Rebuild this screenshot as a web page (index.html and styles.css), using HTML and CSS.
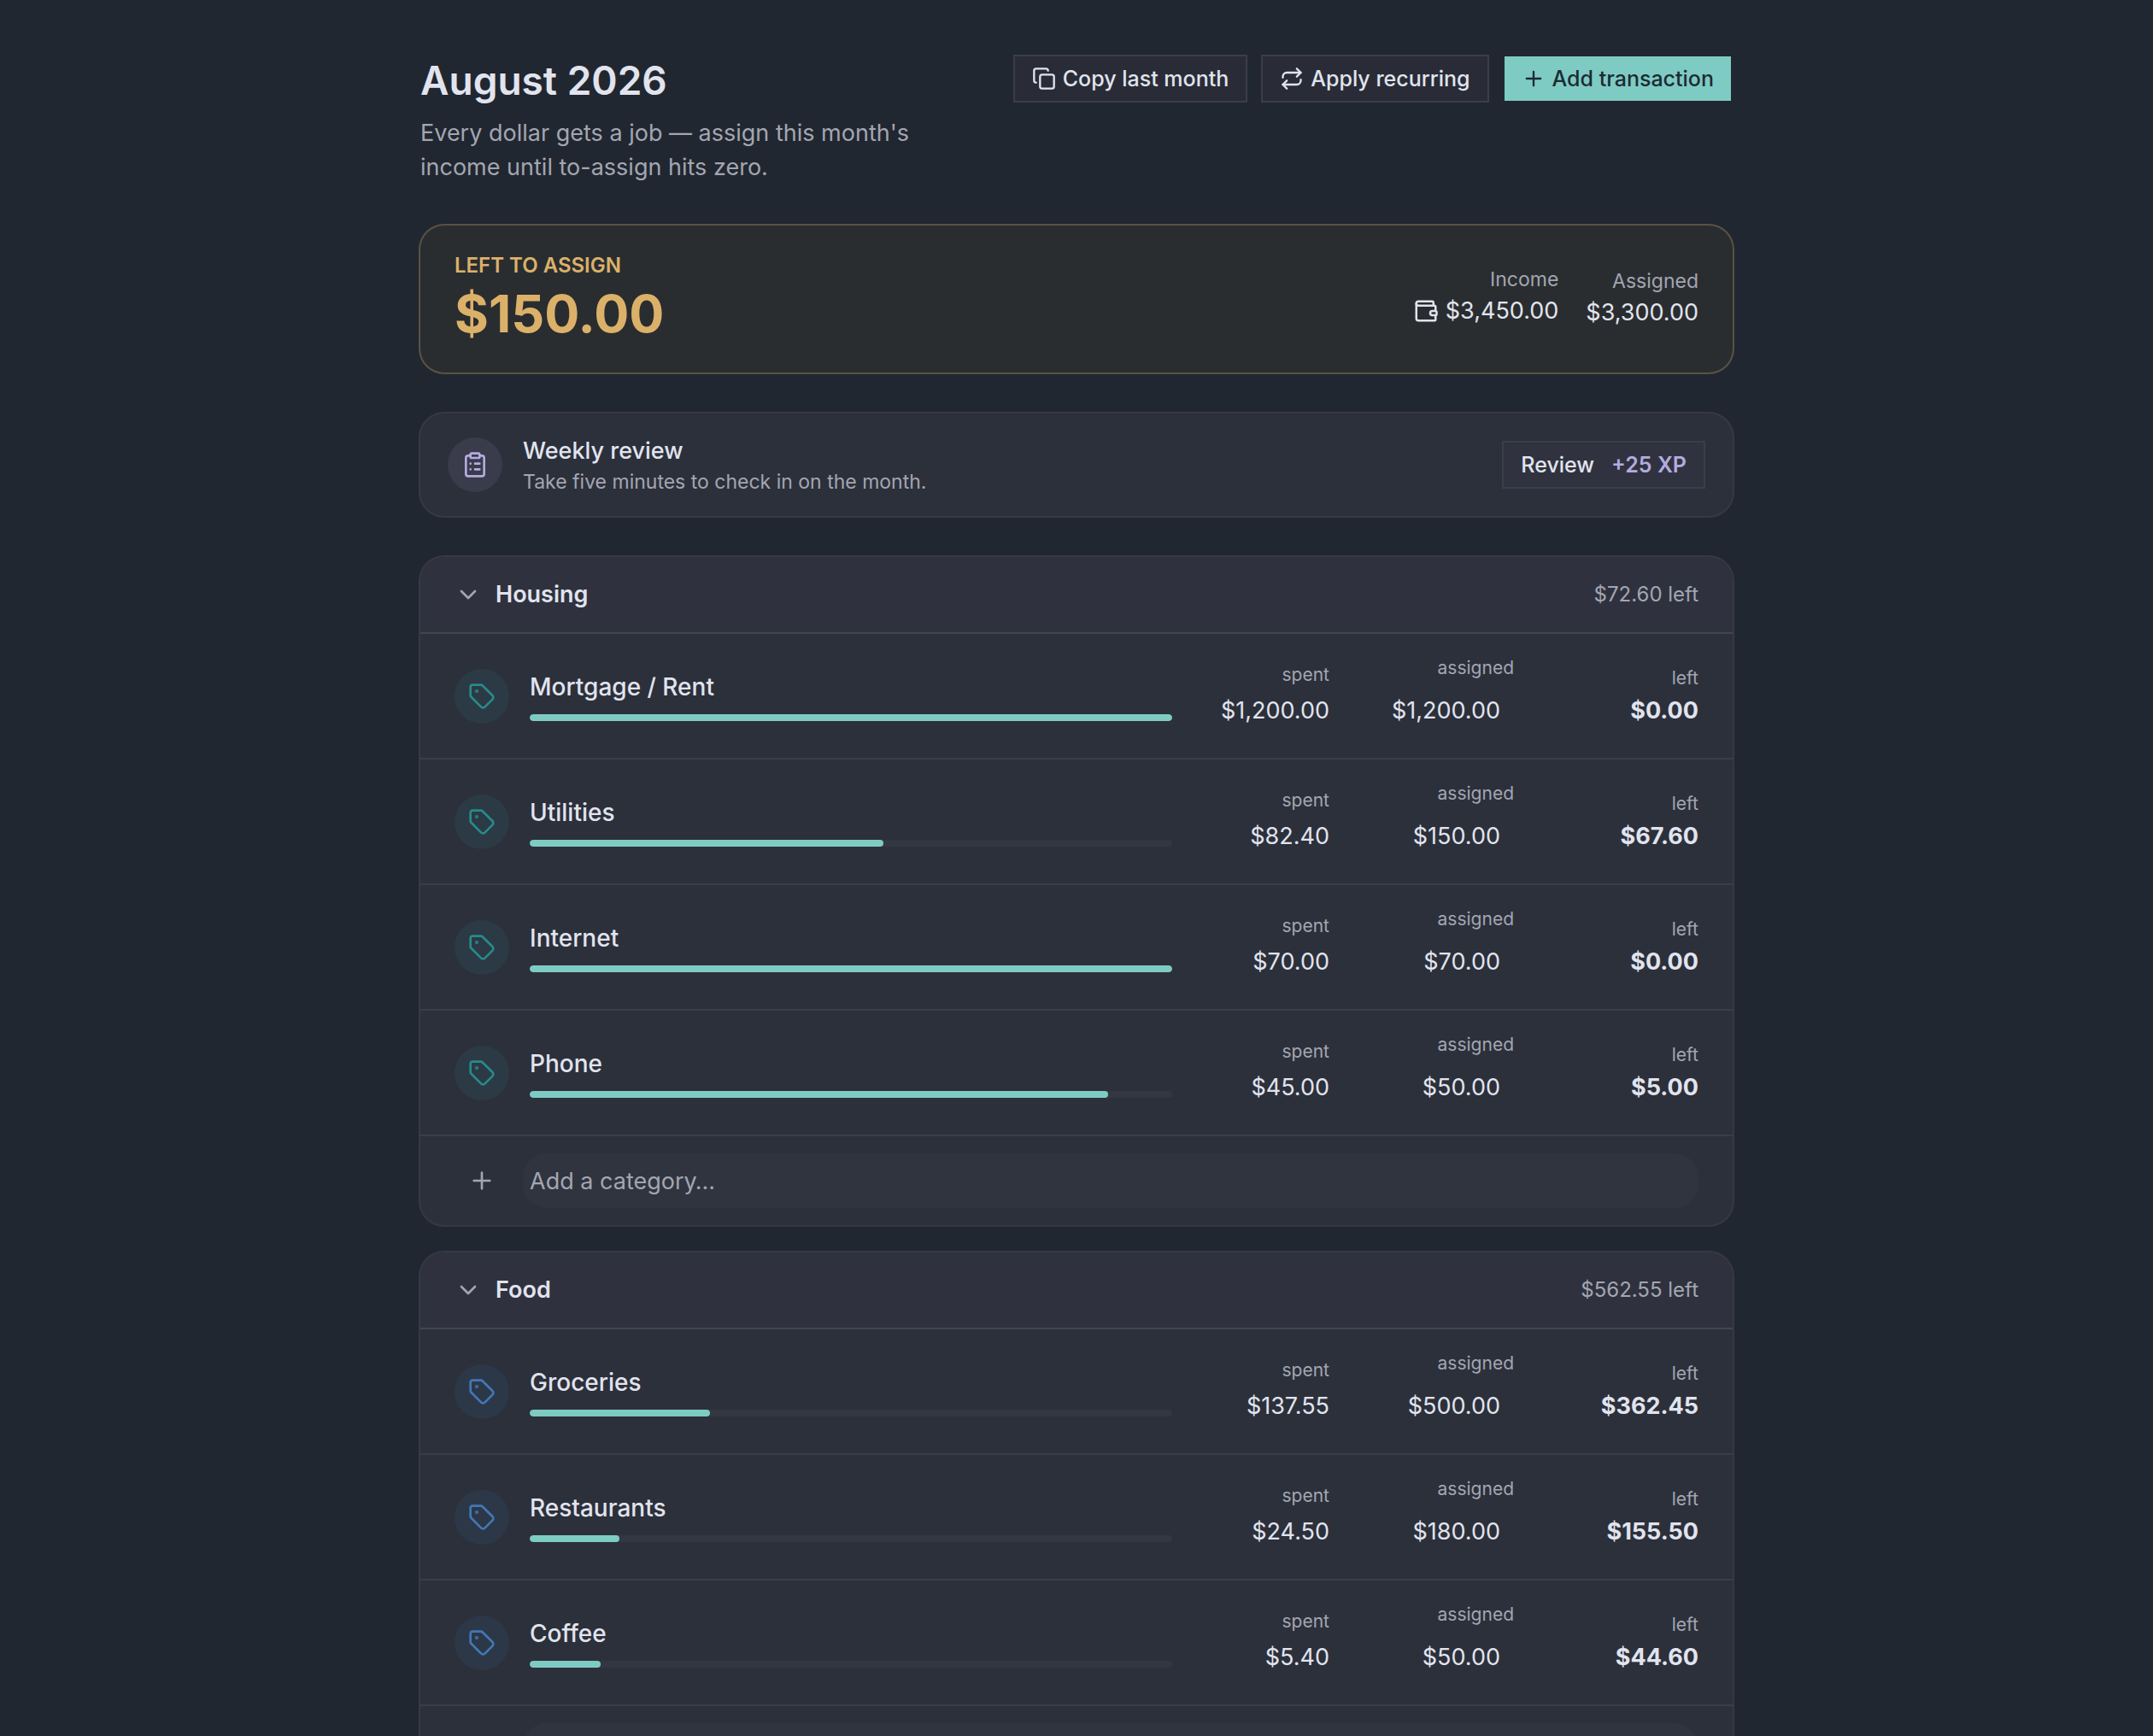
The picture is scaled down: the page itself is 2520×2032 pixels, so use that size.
FILE: index.html
```html
<!DOCTYPE html>
<html lang="en">
<head>
<meta charset="utf-8">
<meta name="viewport" content="width=device-width, initial-scale=1">
<title>Budget – August 2026</title>
<link rel="stylesheet" href="styles.css">
</head>
<body>
<svg class="sprite" aria-hidden="true">
  <symbol id="copy" viewBox="0 0 24 24"><rect x="8" y="8" width="14" height="14" rx="2"/><path d="M4 16c-1.100 0-2-.9-2-2V4c0-1.100.9-2 2-2h10c1.100 0 2 .9 2 2"/></symbol>
  <symbol id="repeat" viewBox="0 0 24 24"><path d="m17 2 4 4-4 4"/><path d="M3 11v-1a4 4 0 0 1 4-4h14"/><path d="m7 22-4-4 4-4"/><path d="M21 13v1a4 4 0 0 1-4 4H3"/></symbol>
  <symbol id="plus" viewBox="0 0 24 24"><path d="M5 12h14M12 5v14"/></symbol>
  <symbol id="chevron" viewBox="0 0 24 24"><path d="m6 9 6 6 6-6"/></symbol>
  <symbol id="wallet" viewBox="0 0 24 24"><path d="M19 7V4a1 1 0 0 0-1-1H5a2 2 0 0 0 0 4h15a1 1 0 0 1 1 1v4h-3a2 2 0 0 0 0 4h3a1 1 0 0 0 1-1v-2a1 1 0 0 0-1-1"/><path d="M3 5v14a2 2 0 0 0 2 2h15a1 1 0 0 0 1-1v-4"/></symbol>
  <symbol id="clipboard" viewBox="0 0 24 24"><rect x="8" y="2" width="8" height="4" rx="1"/><path d="M16 4h2a2 2 0 0 1 2 2v14a2 2 0 0 1-2 2H6a2 2 0 0 1-2-2V6a2 2 0 0 1 2-2h2M12 11h4M12 16h4M8 11h.01M8 16h.01"/></symbol>
  <symbol id="tag" viewBox="0 0 24 24"><path d="M12.586 2.586A2 2 0 0 0 11.172 2H4a2 2 0 0 0-2 2v7.172a2 2 0 0 0 .586 1.414l8.704 8.704a2.426 2.426 0 0 0 3.420 0l6.580-6.580a2.426 2.426 0 0 0 0-3.420z"/><circle cx="7.500" cy="7.500" r=".5" fill="currentColor"/></symbol>
</svg>
<main class="page">
  <header class="page-header">
    <div>
      <h1>August 2026</h1>
      <p class="intro">Every dollar gets a job — assign this month's income until to-assign hits zero.</p>
    </div>
    <div class="actions">
      <button class="btn" type="button"><svg class="icon"><use href="#copy"/></svg>Copy last month</button>
      <button class="btn" type="button"><svg class="icon"><use href="#repeat"/></svg>Apply recurring</button>
      <button class="btn primary" type="button"><svg class="icon"><use href="#plus"/></svg>Add transaction</button>
    </div>
  </header>

  <section class="card hero">
    <div>
      <p class="hero-label">LEFT TO ASSIGN</p>
      <p class="hero-value">$150.00</p>
    </div>
    <div class="totals">
      <div class="total"><span class="total-label">Income</span><button class="income" type="button"><svg class="icon"><use href="#wallet"/></svg>$3,450.00</button></div>
      <div class="total"><span class="total-label">Assigned</span><span class="total-value">$3,300.00</span></div>
    </div>
  </section>

  <section class="card review">
    <span class="badge lilac"><svg class="icon large"><use href="#clipboard"/></svg></span>
    <div class="review-text">
      <h2>Weekly review</h2>
      <p>Take five minutes to check in on the month.</p>
    </div>
    <button class="btn review-btn" type="button">Review <span class="xp">+25 XP</span></button>
  </section>

  <div class="groups">
    <section class="card group teal">
      <header class="group-header"><button class="toggle" type="button"><svg class="icon large"><use href="#chevron"/></svg>Housing</button><span class="group-left">$72.60 left</span></header>
      <div class="row"><span class="badge"><svg class="icon large"><use href="#tag"/></svg></span><div class="name"><span>Mortgage / Rent</span><div class="bar"><div class="fill" style="width:100%"></div></div></div><div class="cell"><span class="label">spent</span><button class="spent" type="button">$1,200.00</button></div><div class="cell"><label class="label" for="a1">assigned</label><input class="assigned" id="a1" value="$1,200.00"></div><div class="cell"><span class="label">left</span><span class="left">$0.00</span></div></div>
      <div class="row"><span class="badge"><svg class="icon large"><use href="#tag"/></svg></span><div class="name"><span>Utilities</span><div class="bar"><div class="fill" style="width:55%"></div></div></div><div class="cell"><span class="label">spent</span><button class="spent" type="button">$82.40</button></div><div class="cell"><label class="label" for="a2">assigned</label><input class="assigned" id="a2" value="$150.00"></div><div class="cell"><span class="label">left</span><span class="left">$67.60</span></div></div>
      <div class="row"><span class="badge"><svg class="icon large"><use href="#tag"/></svg></span><div class="name"><span>Internet</span><div class="bar"><div class="fill" style="width:100%"></div></div></div><div class="cell"><span class="label">spent</span><button class="spent" type="button">$70.00</button></div><div class="cell"><label class="label" for="a3">assigned</label><input class="assigned" id="a3" value="$70.00"></div><div class="cell"><span class="label">left</span><span class="left">$0.00</span></div></div>
      <div class="row"><span class="badge"><svg class="icon large"><use href="#tag"/></svg></span><div class="name"><span>Phone</span><div class="bar"><div class="fill" style="width:90%"></div></div></div><div class="cell"><span class="label">spent</span><button class="spent" type="button">$45.00</button></div><div class="cell"><label class="label" for="a4">assigned</label><input class="assigned" id="a4" value="$50.00"></div><div class="cell"><span class="label">left</span><span class="left">$5.00</span></div></div>
      <div class="add-row"><svg class="icon large"><use href="#plus"/></svg><input class="add-input" placeholder="Add a category…" aria-label="Add a category to Housing"></div>
    </section>

    <section class="card group blue">
      <header class="group-header"><button class="toggle" type="button"><svg class="icon large"><use href="#chevron"/></svg>Food</button><span class="group-left">$562.55 left</span></header>
      <div class="row"><span class="badge"><svg class="icon large"><use href="#tag"/></svg></span><div class="name"><span>Groceries</span><div class="bar"><div class="fill" style="width:28%"></div></div></div><div class="cell"><span class="label">spent</span><button class="spent" type="button">$137.55</button></div><div class="cell"><label class="label" for="b1">assigned</label><input class="assigned" id="b1" value="$500.00"></div><div class="cell"><span class="label">left</span><span class="left">$362.45</span></div></div>
      <div class="row"><span class="badge"><svg class="icon large"><use href="#tag"/></svg></span><div class="name"><span>Restaurants</span><div class="bar"><div class="fill" style="width:14%"></div></div></div><div class="cell"><span class="label">spent</span><button class="spent" type="button">$24.50</button></div><div class="cell"><label class="label" for="b2">assigned</label><input class="assigned" id="b2" value="$180.00"></div><div class="cell"><span class="label">left</span><span class="left">$155.50</span></div></div>
      <div class="row"><span class="badge"><svg class="icon large"><use href="#tag"/></svg></span><div class="name"><span>Coffee</span><div class="bar"><div class="fill" style="width:11%"></div></div></div><div class="cell"><span class="label">spent</span><button class="spent" type="button">$5.40</button></div><div class="cell"><label class="label" for="b3">assigned</label><input class="assigned" id="b3" value="$50.00"></div><div class="cell"><span class="label">left</span><span class="left">$44.60</span></div></div>
      <div class="add-row"><svg class="icon large"><use href="#plus"/></svg><input class="add-input" placeholder="Add a category…" aria-label="Add a category to Food"></div>
    </section>
  </div>
</main>
</body>
</html>
```
FILE: styles.css
```css
:root {
  --bg: #212730;
  --card: #2c303b;
  --card-top: #2f323e;
  --ring: #363944;
  --line: #3a3e49;
  --text: #e1e4ee;
  --muted: #a3a6b2;
  --teal: #7ecbc4;
  --gold: #dbb16a;
  --lilac: #b4abdf;
}

* { box-sizing: border-box; }

html { scrollbar-width: none; }

body {
  margin: 0;
  background: var(--bg);
  color: var(--text);
  font-family: Inter, "Liberation Sans", sans-serif;
  font-size: 27px;
  line-height: 42px;
}

h1, h2, p { margin: 0; }

button, input { font: inherit; color: inherit; }

button { cursor: pointer; white-space: nowrap; }

.sprite { position: absolute; width: 0; height: 0; }

.icon {
  flex: none;
  width: 28px;
  height: 28px;
  fill: none;
  stroke: currentColor;
  stroke-width: 2;
  stroke-linecap: round;
  stroke-linejoin: round;
}

.icon.large { width: 32px; height: 32px; }

.page {
  max-width: 1600px;
  margin: 0 auto;
  padding: 64px 32px;
  display: flex;
  flex-direction: column;
  gap: 48px;
}

.page-header {
  display: flex;
  justify-content: space-between;
  align-items: flex-start;
  gap: 32px;
}

h1 {
  margin-bottom: 12px;
  font-size: 46px;
  line-height: 60px;
  font-weight: 600;
}

.intro {
  max-width: 640px;
  line-height: 40px;
  color: var(--muted);
}

.actions { display: flex; gap: 16px; }

.btn {
  display: flex;
  align-items: center;
  gap: 8px;
  height: 56px;
  padding: 0 20px;
  border: 2px solid #3b3e4a;
  background: #292c37;
  font-size: 25px;
  line-height: 36px;
  font-weight: 500;
}

.btn.primary {
  border-color: transparent;
  background: var(--teal);
  background-clip: padding-box;
  color: #1c2b33;
}

.card {
  border-radius: 28px;
  background: var(--card);
  box-shadow: 0 0 0 2px var(--ring);
}

.hero {
  display: flex;
  justify-content: space-between;
  align-items: center;
  padding: 30px 40px;
  background: #2a2d30;
  box-shadow: 0 0 0 2px #5a5243;
}

.hero-label {
  font-size: 24px;
  line-height: 34px;
  font-weight: 600;
  color: var(--gold);
}

.hero-value {
  font-size: 61px;
  line-height: 78px;
  font-weight: 700;
  color: var(--gold);
}

.totals { display: flex; align-items: center; gap: 32px; }

.total { display: flex; flex-direction: column; align-items: flex-end; }

.total-label { font-size: 23px; line-height: 32px; color: var(--muted); }

.income {
  display: flex;
  align-items: center;
  gap: 8px;
  padding: 0 0 4px;
  border: 0;
  background: none;
}

.income .icon { width: 30px; height: 30px; }

.review {
  display: flex;
  align-items: center;
  gap: 24px;
  padding: 24px 32px;
}

.badge {
  display: flex;
  align-items: center;
  justify-content: center;
  width: 64px;
  height: 64px;
  border-radius: 50%;
}

.badge.lilac { background: #3a3b4b; color: var(--lilac); }
.teal .badge { background: #2b3a44; color: #288a8a; }
.blue .badge { background: #2c3848; color: #4377b5; }

.review-text { flex: 1; }

.review h2 { font-size: 27px; line-height: 40px; font-weight: 500; }

.review p { font-size: 23px; line-height: 32px; color: var(--muted); }

.review-btn { gap: 20px; background: #30333f; }

.xp { font-weight: 600; color: var(--lilac); }

.groups { display: flex; flex-direction: column; gap: 32px; }

.group { overflow: hidden; }

.group-header {
  display: flex;
  justify-content: space-between;
  align-items: center;
  height: 90px;
  padding: 0 40px;
  border-bottom: 2px solid #424550;
  background: var(--card-top);
}

.toggle {
  display: flex;
  align-items: center;
  gap: 16px;
  padding: 0;
  border: 0;
  background: none;
  font-weight: 600;
}

.toggle .icon { color: var(--muted); }

.group-left { font-size: 24px; color: var(--muted); }

.row {
  display: grid;
  grid-template-columns: 64px minmax(0, 1fr) 160px 192px 192px;
  align-items: center;
  gap: 24px;
  min-height: 147px;
  padding: 0 40px;
  border-bottom: 2px solid var(--line);
}

.name {
  display: flex;
  flex-direction: column;
  gap: 14px;
  font-size: 28px;
  line-height: 36px;
  font-weight: 500;
}

.bar { height: 8px; border-radius: 4px; background: #333742; overflow: hidden; }

.fill { height: 8px; border-radius: 4px; background: var(--teal); }

.cell { display: flex; flex-direction: column; align-items: flex-end; }

.label { font-size: 21px; line-height: 34px; color: var(--muted); }

.spent { height: 50px; padding: 0; border: 0; background: none; }

.assigned {
  width: 100%;
  height: 66px;
  padding: 0 16px;
  border: 0;
  background: none;
  text-align: right;
}

.left { font-weight: 700; }

.add-row {
  display: flex;
  align-items: center;
  gap: 32px;
  padding: 20px 40px 20px 56px;
  color: var(--muted);
}

.add-input {
  flex: 1;
  height: 64px;
  padding: 0 8px;
  border: 0;
  border-radius: 28px;
  background: #30343f;
  color: var(--text);
}

.add-input::placeholder { color: var(--muted); opacity: 1; }
```
